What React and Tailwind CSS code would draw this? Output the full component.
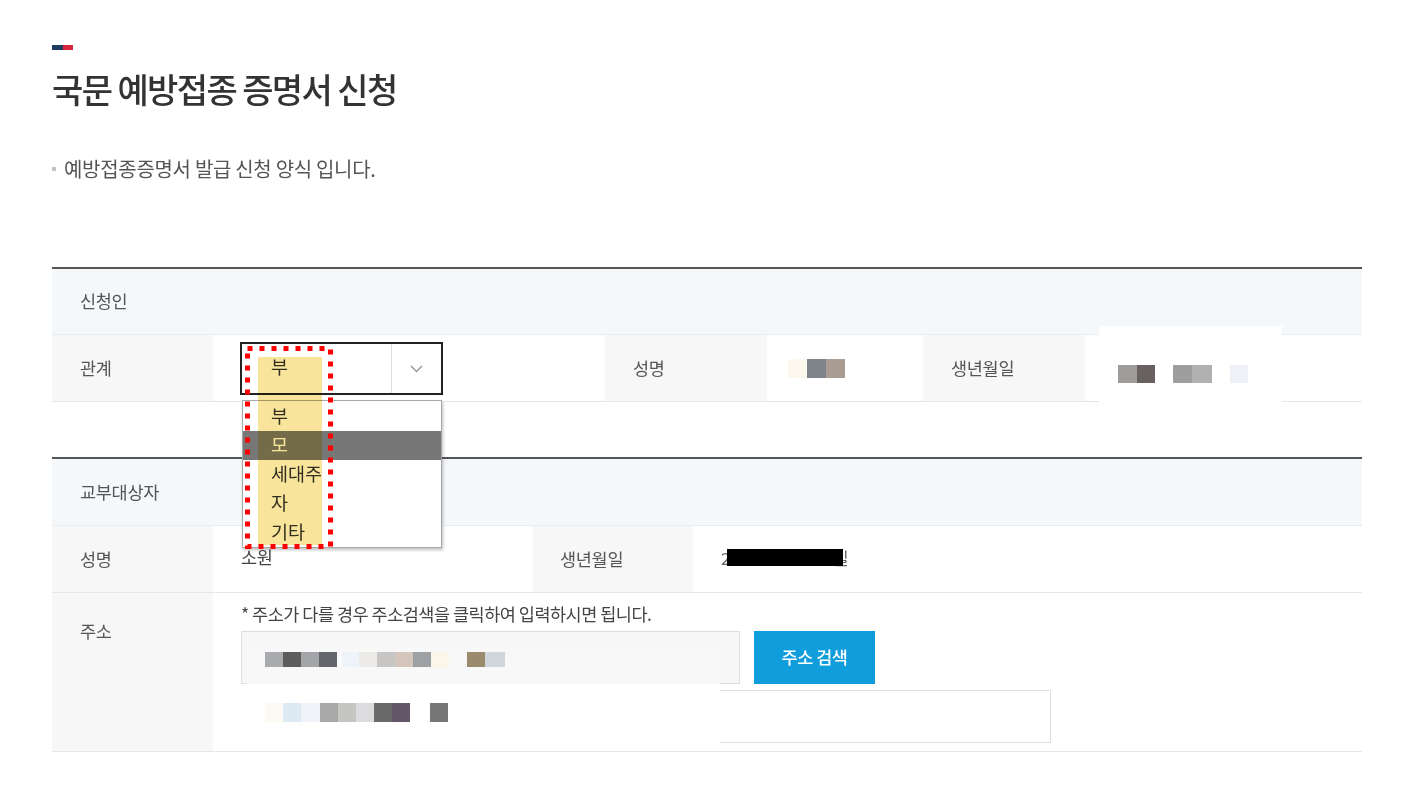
const font = "font-['Noto_Sans_CJK_KR','Noto_Sans',sans-serif]";

// pixelated blocks standing in for redacted values
const Blocks = ({ cells, h }) => (
	<div className="flex">
		{cells.map((c, i) => (
			<div key={i} className={h} style={{ width: c[1], background: c[0] }} />
		))}
	</div>
);

const addr1 = [
	["#a9abae", 18], ["#5d5d5d", 18], ["#a4a5a8", 18], ["#63666a", 18], ["#f8fafc", 5],
	["#eef4f9", 17], ["#ecebe8", 18], ["#c8c6c4", 18], ["#d4c6bd", 18], ["#9ea1a4", 18],
	["#fbf6ea", 18], ["#f8f8f8", 18], ["#9c8a6d", 18], ["#cfd6dc", 20],
];
const addr2 = [
	["#fbfaf3", 18], ["#ddeaf3", 18], ["#f0f4f8", 19], ["#a8a8a8", 18], ["#c5c6c1", 18],
	["#dcdcdf", 18], ["#6a6a6a", 18], ["#65576a", 18], ["#ffffff", 20], ["#777777", 18],
];

const options = ["부", "모", "세대주", "자", "기타"];

const Label = ({ children, w = "w-[161px]", pl = "pl-[28px]" }) => (
	<div className={`${w} ${pl} h-full shrink-0 bg-[#f7f7f7] flex items-center text-[17.5px] tracking-[-0.3px] text-[#555]`}>
		{children}
	</div>
);

export default function App() {
	return (
		<div className={`${font} relative w-[1405px] min-h-[786px] bg-white pl-[52px] pt-[45px] pb-[30px]`}>
			{/* logo bar */}
			<div className="flex h-[5px] w-[21px]">
				<div className="w-[11px] bg-[#1f3a63]" />
				<div className="w-[10px] bg-[#d7263d]" />
			</div>
			<h1 className="mt-[18px] text-[34px] leading-[42px] font-medium tracking-[-1.6px] text-[#333]">
				국문 예방접종 증명서 신청
			</h1>
			<div className="mt-[46px] flex items-center gap-[8px] text-[20px] leading-[26px] tracking-[-0.3px] text-[#555]">
				<span className="w-[4px] h-[4px] bg-[#c4c4c4]" />
				<span>예방접종증명서 발급 신청 양식 입니다.</span>
			</div>

			{/* 신청인 */}
			<div className="mt-[85px] w-[1310px] border-t-2 border-[#555]">
				<div className="h-[66px] bg-[#f5f8fb] border-b border-[#e9edf1] flex items-center pl-[28px] text-[17.5px] tracking-[-0.3px] text-[#555]">
					신청인
				</div>
				<div className="h-[67px] flex border-b border-[#e6e6e6]">
					<Label>관계</Label>
					<div className="w-[392px] shrink-0 pl-[27px] flex items-center">
						<div className="w-[203px] h-[53px] border-2 border-[#222] flex bg-white">
							<div className="flex-1 flex items-center pl-[29px] pb-[2px] text-[18.5px] text-[#333]">부</div>
							<div className="w-[50px] border-l border-[#ddd] flex items-center justify-center">
								<svg width="15" height="9" viewBox="0 0 15 9" fill="none">
									<path d="M2 2l5.5 5.5L13 2" stroke="#9a9a9a" strokeWidth="1.5" />
								</svg>
							</div>
						</div>
					</div>
					<Label w="w-[162px]">성명</Label>
					<div className="w-[156px] shrink-0 flex items-center pl-[21px]">
						<Blocks h="h-[19px]" cells={[["#fdf8ee", 19], ["#7f848a", 19], ["#a99d93", 19]]} />
					</div>
					<Label w="w-[162px]">생년월일</Label>
					<div className="flex-1 relative">
						<div className="absolute left-[14px] top-[-9px] w-[183px] h-[78px] bg-white flex items-center pl-[19px]">
							<div className="mt-[18px]">
								<Blocks
									h="h-[18px]"
									cells={[["#a09c99", 19], ["#67625f", 18], ["#ffffff", 18], ["#9e9e9e", 19], ["#b0b0b0", 20], ["#ffffff", 18], ["#eef2f7", 18]]}
								/>
							</div>
						</div>
					</div>
				</div>
			</div>

			{/* 교부대상자 */}
			<div className="mt-[55px] w-[1310px] border-t-2 border-[#555]">
				<div className="h-[67px] bg-[#f5f8fb] border-b border-[#e9edf1] flex items-center pl-[28px] text-[17.5px] tracking-[-0.3px] text-[#555]">
					교부대상자
				</div>
				<div className="h-[67px] flex border-b border-[#e6e6e6]">
					<Label>성명</Label>
					<div className="w-[320px] shrink-0 flex items-center pl-[28px] pb-[4px] text-[17.5px] tracking-[-0.3px] text-[#444]">소원</div>
					<Label w="w-[160px]" pl="pl-[27px]">생년월일</Label>
					<div className="flex-1 flex items-center pl-[34px] pb-[4px]">
						<div className="relative w-[120px] h-[22px]">
							<span className="absolute left-[-6px] top-[-1px] text-[17px] text-[#666]">2</span>
							<span className="absolute left-[106px] top-[-1px] text-[17px] text-[#666]">일</span>
							<div className="absolute left-0 top-[3px] w-[116px] h-[17px] bg-black" />
						</div>
					</div>
				</div>
				<div className="h-[159px] flex border-b border-[#e6e6e6]">
					<div className="w-[161px] shrink-0 bg-[#f7f7f7] pl-[28px] pt-[25px] text-[17.5px] tracking-[-0.3px] text-[#555]">주소</div>
					<div className="flex-1 relative pl-[28px] pt-[8px]">
						<p className="text-[17.5px] leading-[26px] tracking-[-0.5px] text-[#444]">
							* 주소가 다를 경우 주소검색을 클릭하여 입력하시면 됩니다.
						</p>
						<div className="mt-[4px] flex gap-[14px]">
							<div className="w-[499px] h-[53px] bg-[#f7f7f7] border border-[#ddd]" />
							<button className="w-[121px] h-[53px] bg-[#0f9ddb] text-white text-[17.5px] font-medium tracking-[-0.5px]">
								주소 검색
							</button>
						</div>
						<div className="mt-[6px] w-[810px] h-[53px] bg-white border border-[#ddd]" />

						{/* blurred address overlays */}
						<div className="absolute left-[34px] top-[54px] w-[473px] h-[37px] bg-[#f8f8f8] pl-[18px] pt-[5px]">
							<Blocks h="h-[15px]" cells={addr1} />
						</div>
						<div className="absolute left-[15px] top-[91px] w-[492px] h-[67px] bg-white pl-[37px] pt-[19px]">
							<Blocks h="h-[19px]" cells={addr2} />
						</div>
					</div>
				</div>
			</div>

			{/* open select list */}
			<div className="absolute left-[242px] top-[400px] w-[200px] h-[148px] bg-white border border-[#a8a8a8] shadow-[1px_2px_3px_rgba(0,0,0,0.25)] pt-[1px]">
				{options.map((o) => (
					<div
						key={o}
						className={`h-[29px] flex items-center pl-[28px] pb-[2px] text-[18.5px] ${o === "모" ? "bg-[#777] text-white" : "text-[#333]"}`}
					>
						{o}
					</div>
				))}
			</div>

			{/* annotation: highlight + dotted frame */}
			<div className="absolute left-[258px] top-[357px] w-[64px] h-[188px] bg-[#f8e59b] mix-blend-multiply pointer-events-none" />
			<svg className="absolute left-[245px] top-[346px] pointer-events-none" width="88" height="203" viewBox="0 0 88 203">
				<rect x="2.5" y="2.5" width="83" height="198" fill="none" stroke="#f00" strokeWidth="5" strokeDasharray="5 7" />
			</svg>
		</div>
	);
}
